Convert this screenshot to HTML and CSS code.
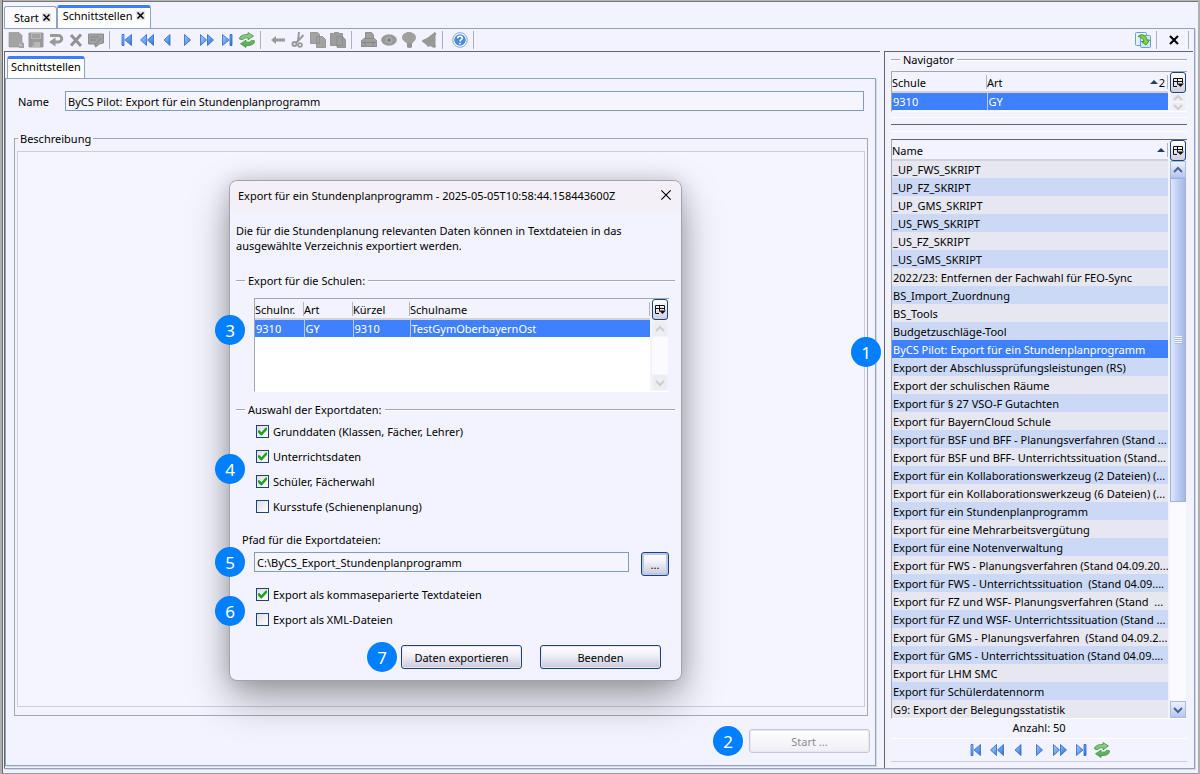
FILE: index.html
```html
<!DOCTYPE html>
<html lang="de">

<head>
    <meta charset="UTF-8">
    <meta name="viewport" content="width=device-width, initial-scale=1.0">
    <title>Schnittstellen</title>
    <link rel="stylesheet" href="styles.css">
</head>

<body>
    <svg class="sprite" aria-hidden="true">
        <defs>
            <linearGradient id="blue" x1="0" y1="0" x2="1" y2="1">
                <stop offset="0" stop-color="#a9cdf7" />
                <stop offset="1" stop-color="#2f74dd" />
            </linearGradient>
            <linearGradient id="green" x1="0" y1="0" x2="0" y2="1">
                <stop offset="0" stop-color="#9bd592" />
                <stop offset="1" stop-color="#4ba648" />
            </linearGradient>
            <symbol id="first" viewBox="0 0 16 16"><path d="M3 2.5h2v11H3zM12.500 2.500v11L6 8z" fill="url(#blue)" stroke="#2667cc" stroke-width=".8" /></symbol>
            <symbol id="rewind" viewBox="0 0 16 16"><path d="M7.500 2.500v11L1.500 8zM14.500 2.500v11L8.500 8z" fill="url(#blue)" stroke="#2667cc" stroke-width=".8" /></symbol>
            <symbol id="prev" viewBox="0 0 16 16"><path d="M11 2.500v11L5 8z" fill="url(#blue)" stroke="#2667cc" stroke-width=".8" /></symbol>
            <symbol id="next" viewBox="0 0 16 16"><path d="M5.500 2.500v11l6-5.500z" fill="url(#blue)" stroke="#2667cc" stroke-width=".8" /></symbol>
            <symbol id="forward" viewBox="0 0 16 16"><path d="M1.500 2.500v11l6-5.500zM8.500 2.500v11l6-5.500z" fill="url(#blue)" stroke="#2667cc" stroke-width=".8" /></symbol>
            <symbol id="last" viewBox="0 0 16 16"><path d="M11 2.500h2v11h-2zM3.500 2.500v11L10 8z" fill="url(#blue)" stroke="#2667cc" stroke-width=".8" /></symbol>
            <symbol id="refresh" viewBox="0 0 16 16">
                <path d="M.5 7C.5 4 4 2.300 9 2.500V.5L14.500 4 9 7.800V6C6.500 5.500 5 6 3.800 7.800zM15.500 8.800c0 3.500-3 5-8.500 4.700v2L1.500 11.700l5.500-3.500V10c3 .5 4.500 0 5.500-1.700z" fill="url(#green)" stroke="#3d943c" stroke-width=".8" />
            </symbol>
            <symbol id="new" viewBox="0 0 16 16"><path d="M1 .5h10l3 3v7a3 3 0 1 1-3 4.500H1z" fill="#a3a3a3" stroke="#8d8d8d" stroke-width=".6" /><circle cx="12.500" cy="12.800" r="1.600" fill="#bdbdbd" /></symbol>
            <symbol id="save" viewBox="0 0 16 16"><path d="M.5 1.500l1-1h13l1 1v13l-1 1h-13l-1-1z" fill="#9a9a9a" /><path d="M3 1h10v6H3zM4 10h8v5H4z" fill="#b7b7b7" /><path d="M4 3h8M4 5h8M5 10v4" stroke="#8c8c8c" /></symbol>
            <symbol id="undo" viewBox="0 0 16 16"><path d="M2 3.500h8.500a3 3 0 0 1 0 6.500H6" fill="none" stroke="#999" stroke-width="3" /><path d="M7.500 5.500v9L1 10z" fill="#999" /></symbol>
            <symbol id="delete" viewBox="0 0 16 16"><path d="M3 3l10 11M13 2.500L3 13.500" stroke="#929292" stroke-width="3" /></symbol>
            <symbol id="edit" viewBox="0 0 16 16"><path d="M.5 2h15v9l-4 1-4 3-1-3h-6z" fill="#a1a1a1" stroke="#8c8c8c" /><path d="M2 5h9M2 8h6M7 13l6-7" stroke="#868686" /></symbol>
            <symbol id="back" viewBox="0 0 16 16"><path d="M1 8l5-4v2.500h9v3H6V12z" fill="#999" /></symbol>
            <symbol id="cut" viewBox="0 0 16 16"><path d="M9 0l-1 9M13.500 3L6 11" stroke="#999" stroke-width="2" /><circle cx="4.500" cy="12" r="2" fill="none" stroke="#999" stroke-width="2" /><circle cx="10" cy="13" r="1.900" fill="none" stroke="#999" stroke-width="1.800" /></symbol>
            <symbol id="copy" viewBox="0 0 16 16"><path d="M.5.5h7l2 2v9h-9zM6.500 4.500h6l3 3v8h-9z" fill="#a3a3a3" stroke="#8b8b8b" stroke-width=".8" /></symbol>
            <symbol id="paste" viewBox="0 0 16 16"><path d="M.5 1.500h3l1-1h4l1 1h3v12H.5zM7 4.500h5.500l3 3v8H7z" fill="#9d9d9d" stroke="#898989" stroke-width=".8" /></symbol>
            <symbol id="print" viewBox="0 0 16 16"><path d="M4.500 6V.500h6L12.500 3v3l3 2.500v6H.5v-6L4 6z" fill="#a0a0a0" stroke="#878787" stroke-width=".9" /><path d="M4 6.500h9M1 10.500h14M4 9v5M12 9v5" stroke="#868686" /></symbol>
            <symbol id="eye" viewBox="0 0 16 16"><ellipse cx="8" cy="8" rx="7.800" ry="5.800" fill="#999" /><circle cx="8" cy="8" r="3.500" fill="#aaa" /><circle cx="8" cy="8" r="1.600" fill="#777" /></symbol>
            <symbol id="bulb" viewBox="0 0 16 16"><path d="M8 0c4 0 7 2.500 7 5.500S12.500 10 11 11.500V15l-1 1H7l-1-1v-3.500C4.500 10 1 8.500 1 5.500S4 0 8 0z" fill="#a0a0a0" /><path d="M6 12h5M6 14h5" stroke="#888" /></symbol>
            <symbol id="bell" viewBox="0 0 16 16"><path d="M13.500 0l2 1.500-1 2.500V12l.5 3-2 1L9 14l-2 1-2-2.500L.8 9.500 1.500 8 6 6l6-4.500z" fill="#989898" /></symbol>
            <symbol id="help" viewBox="0 0 16 16"><circle cx="8" cy="8" r="6.400" fill="#4f8bd4" stroke="#fff" stroke-width="1.200" /><circle cx="8" cy="8" r="7.300" fill="none" stroke="#6a94c9" stroke-width=".8" /><path d="M5.700 6.200C5.700 3.500 10.300 3.500 10.300 6.200 10.300 7.800 8 7.600 8 9.500M8 10.700v1.500" fill="none" stroke="#fff" stroke-width="1.500" /></symbol>
            <symbol id="export" viewBox="0 0 16 16"><rect x=".5" y=".5" width="11" height="13" rx="1" fill="#e4f0fd" stroke="#6b9fd7" /><rect x="5.500" y="3.500" width="10" height="12" rx="1" fill="#d2e4f9" stroke="#6b9fd7" /><path d="M3 4.500C6 1.500 11 2.500 12 8h2.500L11 13 6.500 9.500H9C8.500 6.500 6 5 3 4.500z" fill="#80d72b" stroke="#329135" stroke-width=".9" /></symbol>
            <symbol id="close" viewBox="0 0 12 12"><path d="M2 2l8 8M10 2l-8 8" stroke="currentColor" /></symbol>
            <symbol id="columns" viewBox="0 0 12 12"><path d="M5 9.500H1.500v-8h9V6M1.500 4.500h9M5.500 1.500v6" fill="none" stroke="#111" /><path d="M5 6.500h7L8.500 10z" fill="#111" /></symbol>
            <symbol id="up" viewBox="0 0 12 12"><path d="M2 8l4-4 4 4" fill="none" stroke="currentColor" stroke-width="2" /></symbol>
            <symbol id="down" viewBox="0 0 12 12"><path d="M2 4l4 4 4-4" fill="none" stroke="currentColor" stroke-width="2" /></symbol>
        </defs>
    </svg>

    <div class="window">
        <nav class="tabs">
            <div class="tab"><a href="#start">Start</a><button class="tab-close" aria-label="Start schließen"><svg><use href="#close" /></svg></button></div>
            <div class="tab active"><a href="#schnittstellen">Schnittstellen</a><button class="tab-close" aria-label="Schnittstellen schließen"><svg><use href="#close" /></svg></button></div>
        </nav>

        <div class="content">
            <div class="toolbar">
                <div class="tools">
                    <button aria-label="Neu" disabled><svg><use href="#new" /></svg></button>
                    <button aria-label="Speichern" disabled><svg><use href="#save" /></svg></button>
                    <button aria-label="Rückgängig" disabled><svg><use href="#undo" /></svg></button>
                    <button aria-label="Löschen" disabled><svg><use href="#delete" /></svg></button>
                    <button aria-label="Bearbeiten" disabled><svg><use href="#edit" /></svg></button>
                </div>
                <div class="tools">
                    <button aria-label="Erster"><svg><use href="#first" /></svg></button>
                    <button aria-label="Schnell zurück"><svg><use href="#rewind" /></svg></button>
                    <button aria-label="Zurück"><svg><use href="#prev" /></svg></button>
                    <button aria-label="Weiter"><svg><use href="#next" /></svg></button>
                    <button aria-label="Schnell weiter"><svg><use href="#forward" /></svg></button>
                    <button aria-label="Letzter"><svg><use href="#last" /></svg></button>
                    <button aria-label="Aktualisieren"><svg><use href="#refresh" /></svg></button>
                </div>
                <div class="tools">
                    <button aria-label="Vorherige Maske" disabled><svg><use href="#back" /></svg></button>
                    <button aria-label="Ausschneiden" disabled><svg><use href="#cut" /></svg></button>
                    <button aria-label="Kopieren" disabled><svg><use href="#copy" /></svg></button>
                    <button aria-label="Einfügen" disabled><svg><use href="#paste" /></svg></button>
                </div>
                <div class="tools">
                    <button aria-label="Drucken" disabled><svg><use href="#print" /></svg></button>
                    <button aria-label="Ansicht" disabled><svg><use href="#eye" /></svg></button>
                    <button aria-label="Hinweis" disabled><svg><use href="#bulb" /></svg></button>
                    <button aria-label="Erinnerung" disabled><svg><use href="#bell" /></svg></button>
                </div>
                <div class="tools">
                    <button aria-label="Hilfe"><svg><use href="#help" /></svg></button>
                </div>
                <div class="tools right">
                    <button aria-label="Exportieren"><svg><use href="#export" /></svg></button>
                </div>
                <div class="tools wide">
                    <button aria-label="Schließen"><svg class="close-icon"><use href="#close" /></svg></button>
                </div>
            </div>

            <div class="main">
                <main class="left">
                    <a class="sub-tab" href="#schnittstellen">Schnittstellen</a>
                    <div class="panel">
                        <div class="name-row">
                            <label for="name">Name</label>
                            <input type="text" id="name" value="ByCS Pilot: Export für ein Stundenplanprogramm" readonly>
                        </div>
                        <fieldset class="description">
                            <legend>Beschreibung</legend>
                            <textarea aria-label="Beschreibung" readonly></textarea>
                        </fieldset>
                        <div class="start-row">
                            <span class="badge">2</span>
                            <button class="btn" disabled>Start ...</button>
                        </div>
                    </div>
                </main>

                <aside class="navigator">
                    <h2 class="group-title">Navigator</h2>
                    <div class="grid schools">
                        <table>
                            <thead>
                                <tr><th class="col-school">Schule</th><th>Art<span class="sort">2</span></th></tr>
                            </thead>
                            <tbody>
                                <tr class="selected"><td>9310</td><td>GY</td></tr>
                            </tbody>
                        </table>
                        <div class="scroll off">
                            <button class="columns" aria-label="Spalten"><svg><use href="#columns" /></svg></button>
                            <button class="arrow" aria-label="Nach oben"><svg><use href="#up" /></svg></button>
                            <button class="arrow" aria-label="Nach unten"><svg><use href="#down" /></svg></button>
                        </div>
                    </div>
                    <div class="splitter"></div>
                    <div class="grid list">
                        <table>
                            <thead>
                                <tr><th>Name<span class="sort"></span></th></tr>
                            </thead>
                            <tbody>
                                <tr><td>_UP_FWS_SKRIPT</td></tr>
                                <tr><td>_UP_FZ_SKRIPT</td></tr>
                                <tr><td>_UP_GMS_SKRIPT</td></tr>
                                <tr><td>_US_FWS_SKRIPT</td></tr>
                                <tr><td>_US_FZ_SKRIPT</td></tr>
                                <tr><td>_US_GMS_SKRIPT</td></tr>
                                <tr><td>2022/23: Entfernen der Fachwahl für FEO-Sync</td></tr>
                                <tr><td>BS_Import_Zuordnung</td></tr>
                                <tr><td>BS_Tools</td></tr>
                                <tr><td>Budgetzuschläge-Tool</td></tr>
                                <tr class="selected"><td>ByCS Pilot: Export für ein Stundenplanprogramm</td></tr>
                                <tr><td>Export der Abschlussprüfungsleistungen (RS)</td></tr>
                                <tr><td>Export der schulischen Räume</td></tr>
                                <tr><td>Export für § 27 VSO-F Gutachten</td></tr>
                                <tr><td>Export für BayernCloud Schule</td></tr>
                                <tr><td>Export für BSF und BFF - Planungsverfahren (Stand ...</td></tr>
                                <tr><td>Export für BSF und BFF- Unterrichtssituation (Stand...</td></tr>
                                <tr><td>Export für ein Kollaborationswerkzeug (2 Dateien) (...</td></tr>
                                <tr><td>Export für ein Kollaborationswerkzeug (6 Dateien) (...</td></tr>
                                <tr><td>Export für ein Stundenplanprogramm</td></tr>
                                <tr><td>Export für eine Mehrarbeitsvergütung</td></tr>
                                <tr><td>Export für eine Notenverwaltung</td></tr>
                                <tr><td>Export für FWS - Planungsverfahren (Stand 04.09.20...</td></tr>
                                <tr><td>Export für FWS - Unterrichtssituation&nbsp; (Stand 04.09....</td></tr>
                                <tr><td>Export für FZ und WSF- Planungsverfahren (Stand&nbsp; ...</td></tr>
                                <tr><td>Export für FZ und WSF- Unterrichtssituation (Stand ...</td></tr>
                                <tr><td>Export für GMS - Planungsverfahren&nbsp; (Stand 04.09.2...</td></tr>
                                <tr><td>Export für GMS - Unterrichtssituation (Stand 04.09....</td></tr>
                                <tr><td>Export für LHM SMC</td></tr>
                                <tr><td>Export für Schülerdatennorm</td></tr>
                                <tr><td>G9: Export der Belegungsstatistik</td></tr>
                            </tbody>
                        </table>
                        <div class="scroll">
                            <button class="columns" aria-label="Spalten"><svg><use href="#columns" /></svg></button>
                            <button class="arrow" aria-label="Nach oben"><svg><use href="#up" /></svg></button>
                            <div class="track"><div class="thumb"></div></div>
                            <button class="arrow" aria-label="Nach unten"><svg><use href="#down" /></svg></button>
                        </div>
                        <span class="badge badge-list">1</span>
                    </div>
                    <p class="count">Anzahl: 50</p>
                    <div class="pager">
                        <button aria-label="Erster"><svg><use href="#first" /></svg></button>
                        <button aria-label="Schnell zurück"><svg><use href="#rewind" /></svg></button>
                        <button aria-label="Zurück"><svg><use href="#prev" /></svg></button>
                        <button aria-label="Weiter"><svg><use href="#next" /></svg></button>
                        <button aria-label="Schnell weiter"><svg><use href="#forward" /></svg></button>
                        <button aria-label="Letzter"><svg><use href="#last" /></svg></button>
                        <button aria-label="Aktualisieren"><svg><use href="#refresh" /></svg></button>
                    </div>
                </aside>
            </div>
        </div>
    </div>

    <div class="dialog" role="dialog" aria-labelledby="dialogTitle">
        <header class="dialog-header">
            <h1 id="dialogTitle">Export für ein Stundenplanprogramm - 2025-05-05T10:58:44.158443600Z</h1>
            <button aria-label="Schließen"><svg><use href="#close" /></svg></button>
        </header>
        <div class="dialog-body">
            <p class="intro">Die für die Stundenplanung relevanten Daten können in Textdateien in das<br>ausgewählte Verzeichnis exportiert werden.</p>

            <h2 class="group-title">Export für die Schulen:</h2>
            <div class="grid export-schools">
                <table>
                    <thead>
                        <tr><th class="col-nr">Schulnr.</th><th class="col-type">Art</th><th class="col-short">Kürzel</th><th>Schulname</th></tr>
                    </thead>
                    <tbody>
                        <tr class="selected"><td>9310</td><td>GY</td><td>9310</td><td>TestGymOberbayernOst</td></tr>
                    </tbody>
                </table>
                <div class="scroll off">
                    <button class="columns" aria-label="Spalten"><svg><use href="#columns" /></svg></button>
                    <button class="arrow" aria-label="Nach oben"><svg><use href="#up" /></svg></button>
                    <div class="track"></div>
                    <button class="arrow" aria-label="Nach unten"><svg><use href="#down" /></svg></button>
                </div>
                <span class="badge badge-table">3</span>
            </div>

            <h2 class="group-title">Auswahl der Exportdaten:</h2>
            <div class="checks">
                <label><input type="checkbox" checked>Grunddaten (Klassen, Fächer, Lehrer)</label>
                <label><input type="checkbox" checked>Unterrichtsdaten</label>
                <label><input type="checkbox" checked>Schüler, Fächerwahl</label>
                <label><input type="checkbox">Kursstufe (Schienenplanung)</label>
                <span class="badge badge-data">4</span>
            </div>

            <label class="path-label" for="path">Pfad für die Exportdateien:</label>
            <div class="path-row">
                <input type="text" id="path" value="C:\ByCS_Export_Stundenplanprogramm">
                <button class="btn browse">...</button>
                <span class="badge badge-path">5</span>
            </div>
            <div class="checks formats">
                <label><input type="checkbox" checked>Export als kommaseparierte Textdateien</label>
                <label><input type="checkbox">Export als XML-Dateien</label>
                <span class="badge badge-format">6</span>
            </div>
            <div class="actions">
                <span class="badge">7</span>
                <button class="btn">Daten exportieren</button>
                <button class="btn">Beenden</button>
            </div>
        </div>
    </div>
</body>

</html>
```
FILE: styles.css
```css
* {
    box-sizing: border-box;
}

body {
    margin: 0;
    height: 100vh;
    font-family: "Noto Sans", "Open Sans", sans-serif;
    font-size: 11px;
    line-height: 15px;
    color: #000;
    background-color: #b0b0b0;
    overflow: hidden;
}

button,
input,
textarea {
    font: inherit;
    color: inherit;
}

button {
    padding: 0;
    border: none;
    background: none;
}

a {
    color: inherit;
    text-decoration: none;
}

h1,
h2,
p {
    margin: 0;
    font-size: 11px;
    font-weight: normal;
}

svg {
    display: block;
    width: 16px;
    height: 16px;
}

.sprite {
    position: absolute;
    width: 0;
    height: 0;
}

.window {
    display: flex;
    flex-direction: column;
    height: 100vh;
    margin: 0 2px;
    padding: 5px 3px 4px 1px;
    background-color: #f3f3ff;
    border-left: 1px solid #666;
    border-bottom: 1px solid #8a9db8;
    box-shadow: inset 0 1px #b5b5b5, inset 0 2px #777;
}

/* tabs */
.tabs {
    display: flex;
    align-items: flex-end;
    height: 23px;
    flex: none;
}

.tab {
    display: flex;
    align-items: center;
    gap: 3px;
    height: 22px;
    padding: 0 5px 0 9px;
    background-color: #fbfbff;
    border: 1px solid #8da3c0;
    border-bottom: none;
    border-radius: 3px 3px 0 0;
}

.tab.active {
    height: 23px;
    padding: 0 5px 5px;
    border-top: 3px solid #3d7dfd;
    background-color: #fff;
}

.tab-close {
    background-color: #e2e2ec;
}

.tab-close svg {
    width: 9px;
    height: 9px;
    stroke-width: 2;
}

.tab-close svg,
.close-icon {
    overflow: visible;
}

.content {
    display: flex;
    flex-direction: column;
    flex: 1;
    min-height: 0;
    border: 1px solid #8da3c0;
    border-left: none;
    box-shadow: 1px 1px #d3d9e8;
}

/* toolbar */
.toolbar {
    display: flex;
    align-items: center;
    height: 22px;
    flex: none;
    padding: 0 5px 0 4px;
}

.tools {
    display: flex;
    gap: 4px;
    padding-right: 5px;
    margin-right: 9px;
    border-right: 1px solid #b0b0b8;
    height: 18px;
    align-items: center;
}

.tools.right {
    margin-left: auto;
    margin-right: 11px;
}

.tools.wide {
    margin-right: 0;
    padding-right: 8px;
}

.close-icon {
    width: 12px;
    height: 12px;
    stroke-width: 2;
}

.main {
    display: flex;
    flex: 1;
    min-height: 0;
    gap: 4px;
    padding-right: 1px;
}

/* left part */
.left {
    display: flex;
    flex-direction: column;
    align-items: flex-start;
    flex: 1;
    min-width: 0;
    padding: 4px 4px 2px 0;
    border-top: 1px solid #666;
    border-left: 1px solid #666;
}

.sub-tab {
    margin-left: 2px;
    height: 22px;
    padding: 0 3px;
    background-color: #fff;
    border: 1px solid #8da3c0;
    border-top: 3px solid #3d7dfd;
    border-bottom: none;
    border-radius: 3px 3px 0 0;
}

.panel {
    display: flex;
    flex-direction: column;
    align-self: stretch;
    flex: 1;
    min-height: 0;
    padding: 12px 7px 12px 8px;
    border: 1px solid #8da3c0;
    box-shadow: 1px 1px #d3d9e8;
}

.name-row {
    display: flex;
    align-items: center;
    padding: 0 4px;
}

.name-row label {
    width: 47px;
}

input[type="text"] {
    flex: 1;
    min-width: 0;
    height: 20px;
    padding: 0 2px;
    border: 1px solid #7f9dbf;
    border-radius: 0;
    background-color: #f5f5ff;
}

.description {
    flex: 1;
    display: flex;
    min-width: 0;
    min-height: 0;
    margin: 20px 0 0;
    padding: 5px 2px 8px;
    border: 1px solid #a6a6b2;
}

.description legend {
    margin-left: 1px;
    padding: 0 2px;
}

.description textarea {
    flex: 1;
    width: 100%;
    height: 100%;
    border: 1px solid #ccccda;
    background-color: #f5f5ff;
    resize: none;
}

.start-row {
    display: flex;
    justify-content: flex-end;
    align-items: center;
    gap: 6px;
    height: 24px;
    margin: 13px -2px 0 0;
}

.btn {
    width: 121px;
    height: 24px;
    border: 1px solid #1c4277;
    border-radius: 3px;
    background: linear-gradient(#fff, #f1f1fa 40%, #c9c9da);
    box-shadow: inset 0 0 0 1px #e8e8f4;
}

.btn:disabled {
    color: #8a8a92;
    border-color: #c7c7d2;
    background: linear-gradient(#fff, #eeeef5);
}

.badge {
    display: flex;
    align-items: center;
    justify-content: center;
    width: 30px;
    height: 30px;
    border-radius: 50%;
    background-color: #0080ff;
    color: #fff;
    font-size: 17px;
    z-index: 1;
}

/* navigator */
.navigator {
    display: flex;
    flex-direction: column;
    flex: 0 0 309px;
    padding: 0 6px 6px;
    border-top: 1px solid #666;
    border-left: 1px solid #666;
}

.group-title {
    display: flex;
    align-items: center;
    gap: 3px;
}

.group-title::before,
.group-title::after {
    content: "";
    width: 9px;
    height: 1px;
    background-color: #a6a6b0;
    box-shadow: 0 1px #fff;
}

.group-title::after {
    flex: 1;
}

.grid {
    position: relative;
    display: flex;
    border-top: 1px solid #a6a6b0;
    border-left: 1px solid #a6a6b0;
    border-bottom: 1px solid #fff;
}

.grid table {
    flex: 1;
    width: 0;
    align-self: flex-start;
    table-layout: fixed;
    border-collapse: collapse;
}

.grid th,
.grid td {
    padding: 0 0 0 1px;
    text-align: left;
    font-weight: normal;
    white-space: nowrap;
    overflow: hidden;
}

.grid th {
    position: relative;
    height: 20px;
    padding: 1px 0 0;
    border-bottom: 2px solid #d2d2da;
}

.grid th::after {
    content: "";
    position: absolute;
    top: 3px;
    right: 0;
    width: 1px;
    height: 14px;
    background-color: #b4b4bc;
}

.grid td {
    height: 18px;
}

.grid .selected td {
    background-color: #3f80ff;
    color: #fff;
}

.selected td + td {
    border-left: 1px solid #c4c4cc;
}

.sort {
    float: right;
    display: flex;
    align-items: center;
    gap: 1px;
    padding-right: 3px;
    height: 15px;
}

.sort::before {
    content: "";
    border: 4px solid transparent;
    border-top: none;
    border-bottom: 4px solid #24405f;
}

.scroll {
    display: flex;
    flex-direction: column;
    width: 19px;
    padding: 0 1px 0 2px;
}

.columns {
    display: flex;
    align-items: center;
    justify-content: center;
    flex: none;
    height: 21px;
    border: 1px solid #1c4277;
    border-radius: 3px;
    background: linear-gradient(#fff, #d0d0df);
}

.columns svg,
.arrow svg {
    width: 12px;
    height: 12px;
}

.arrow {
    display: flex;
    align-items: center;
    justify-content: center;
    flex: none;
    height: 17px;
    color: #4a6591;
    border: 1px solid #a9bce6;
    background: linear-gradient(#eef2ff, #b4c6ef);
}

.off .arrow {
    color: #ccccd2;
    border-color: #f3f3fa;
    background: #ededf3;
}

.track {
    flex: 1;
    background-color: #fbfbff;
}

.thumb {
    display: flex;
    align-items: center;
    justify-content: center;
    height: 62%;
    border: 1px solid #9fb2df;
    background: linear-gradient(90deg, #dfe8ff, #bdcdf4 50%, #a6b8e2);
}

.thumb::before {
    content: "";
    width: 7px;
    height: 8px;
    background: repeating-linear-gradient(#f4f7ff 0 1px, #a9bbe3 1px 2px);
}

.schools {
    margin-top: 4px;
    height: 41px;
}

.schools .arrow {
    height: 9px;
}

.col-school {
    width: 95px;
}

.splitter {
    height: 15px;
    margin: 5px 0 7px;
    border-top: 1px solid #fff;
    border-bottom: 1px solid #fff;
    background: linear-gradient(#666, #666) center / 100% 1px no-repeat;
}

.list {
    flex: 1;
    min-height: 0;
    border-top-color: #666;
}

.list td {
    background-color: #e7e7f1;
}

.list tr:nth-child(even) td {
    background-color: #cbd9f6;
}

.badge-list {
    position: absolute;
    top: 197px;
    left: -41px;
}

.count {
    padding: 1px 0 3px;
    text-align: center;
}

.pager {
    display: flex;
    justify-content: center;
    gap: 5px;
    padding: 3px 0;
    border-top: 1px solid #fff;
    border-bottom: 1px solid #ccccda;
}

/* dialog */
.dialog {
    position: absolute;
    top: 180px;
    left: 229px;
    width: 453px;
    background-color: #f3f3ff;
    border: 1px solid #a3a3ab;
    border-radius: 8px;
    box-shadow: 0 18px 40px rgba(0, 0, 0, .35), 0 0 20px rgba(0, 0, 0, .15);
}

.dialog-header {
    display: flex;
    align-items: center;
    justify-content: space-between;
    height: 30px;
    padding: 0 8px 2px;
    background-color: #f4f0f7;
    border-radius: 8px 8px 0 0;
}

.dialog-header svg {
    width: 14px;
    height: 14px;
}

.dialog-body {
    padding: 12px 6px 11px;
}

.intro {
    margin-bottom: 20px;
}

.export-schools {
    height: 94px;
    margin: 10px 6px 10px 18px;
    background: linear-gradient(#fff, #fff) 0 22px no-repeat;
}

.export-schools thead,
.export-schools .scroll {
    background-color: #f3f3ff;
}

.col-nr,
.col-type {
    width: 49px;
}

.col-short {
    width: 57px;
}

.badge-table {
    position: absolute;
    top: 16px;
    left: -40px;
}

.checks {
    position: relative;
    display: flex;
    flex-direction: column;
    align-items: flex-start;
    gap: 10px;
    padding: 7px 0 0 20px;
}

.checks label {
    display: flex;
    align-items: center;
    gap: 4px;
}

input[type="checkbox"] {
    appearance: none;
    width: 13px;
    height: 13px;
    margin: 0;
    border: 1px solid #1c4277;
    background: linear-gradient(135deg, #dcdce2, #fff);
}

input[type="checkbox"]:checked::before {
    content: "";
    display: block;
    width: 9px;
    height: 9px;
    margin: 1px;
    background-color: #21a121;
    clip-path: polygon(0 35%, 18% 35%, 38% 58%, 85% 5%, 100% 5%, 100% 30%, 42% 95%, 32% 95%, 0 60%);
}

.badge-data {
    position: absolute;
    top: 37px;
    left: -21px;
}

.path-label {
    display: block;
    margin: 18px 0 5px 6px;
}

.path-row {
    position: relative;
    display: flex;
    gap: 12px;
    padding: 0 6px 0 18px;
}

.btn.browse {
    width: 28px;
    box-shadow: inset 0 0 0 2px #b9c8ef;
}

.badge-path {
    position: absolute;
    top: -5px;
    left: -21px;
}

.formats {
    padding-top: 11px;
}

.badge-format {
    position: absolute;
    top: 20px;
    left: -21px;
}

.actions {
    display: flex;
    align-items: center;
    justify-content: flex-end;
    height: 24px;
    margin: 18px 14px 0 0;
}

.actions .badge {
    margin-right: 4px;
}

.actions .btn + .btn {
    margin-left: 18px;
}
```
